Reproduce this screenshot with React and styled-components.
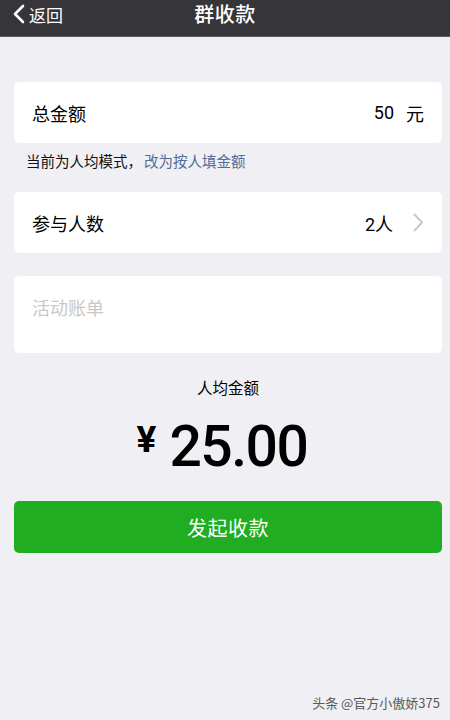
import React from "react";
import styled, { createGlobalStyle } from "styled-components";

const Global = createGlobalStyle`
  html, body { margin: 0; padding: 0; background: #efeff4; }
  body { font-family: "Noto Sans CJK SC", "Noto Sans", sans-serif; }
  * { box-sizing: border-box; }
`;

const Page = styled.div`
  width: 450px;
  height: 720px;
  background: #efeff4;
  display: flex;
  flex-direction: column;
  position: relative;
  overflow: hidden;
`;

const NavBar = styled.div`
  height: 37px;
  background: #363539;
  border-bottom: 1px solid #5a595e;
  display: grid;
  grid-template-columns: 1fr auto 1fr;
  align-items: start;
  color: #fff;
`;

const Back = styled.div`
  display: flex;
  align-items: center;
  gap: 4px;
  padding-left: 12px;
  height: 28px;
  font-size: 17px;
`;

const Title = styled.div`
  font-size: 20px;
  font-weight: 500;
  line-height: 28px;
  letter-spacing: 0.5px;
`;

const Body = styled.div`
  display: flex;
  flex-direction: column;
  padding: 0 8px 0 14px;
`;

const Card = styled.div`
  background: #fff;
  border-radius: 5px;
  height: ${(p) => p.$h || 61}px;
  margin-top: ${(p) => p.$mt || 0}px;
  display: flex;
  align-items: ${(p) => (p.$top ? "flex-start" : "center")};
  justify-content: space-between;
  padding: ${(p) => (p.$top ? "18px 18px 0 18px" : "0 18px")};
  font-size: 18px;
  color: #000;
`;

const Label = styled.span`
  color: ${(p) => (p.$placeholder ? "#c8c8c8" : "#000")};
`;

const Value = styled.div`
  display: flex;
  align-items: center;
  gap: ${(p) => p.$gap || 0}px;
`;

const Num = styled.span`
  font-family: "Roboto", "Noto Sans", sans-serif;
  font-size: 18px;
`;

const Note = styled.div`
  font-size: 14.5px;
  color: #111;
  padding: 6px 0 0 12px;
  height: 49px;
  line-height: 24px;
`;

const Link = styled.span`
  color: #576b95;
  margin-left: 2px;
`;

const Center = styled.div`
  text-align: center;
  font-size: 15.5px;
  color: #000;
  margin-top: ${(p) => p.$mt}px;
  line-height: 22px;
`;

const Amount = styled.div`
  display: flex;
  justify-content: center;
  align-items: flex-start;
  margin-top: 18px;
  padding-right: 12px;
  height: 62px;
  color: #000;
`;

const Yen = styled.span`
  font-family: "Roboto", sans-serif;
  font-weight: 700;
  font-size: 37px;
  line-height: 1;
  margin-top: 5px;
  margin-right: 13px;
`;

const Big = styled.span`
  font-family: "Roboto", sans-serif;
  font-weight: 500;
  font-size: 57px;
  line-height: 62px;
  letter-spacing: -1.5px;
`;

const Button = styled.div`
  margin-top: 23px;
  height: 52px;
  border-radius: 5px;
  background: #21ad21;
  color: #fff;
  font-size: 20px;
  display: flex;
  align-items: center;
  justify-content: center;
  letter-spacing: 0.5px;
`;

const Watermark = styled.div`
  position: absolute;
  right: 10px;
  bottom: 8px;
  font-size: 13px;
  color: #5a5a5a;
`;

export default function App() {
  return (
    <Page>
      <Global />
      <NavBar>
        <Back>
          <svg width="13" height="20" viewBox="0 0 13 20">
            <path d="M11 2 L3 10 L11 18" stroke="#fff" strokeWidth="2.6" fill="none" strokeLinecap="round" strokeLinejoin="round" />
          </svg>
          <span>返回</span>
        </Back>
        <Title>群收款</Title>
        <div />
      </NavBar>
      <Body>
        <Card $mt={45}>
          <Label>总金额</Label>
          <Value $gap={12}>
            <Num>50</Num>
            <span>元</span>
          </Value>
        </Card>
        <Note>
          当前为人均模式，<Link>改为按人填金额</Link>
        </Note>
        <Card>
          <Label>参与人数</Label>
          <Value $gap={20}>
            <span><Num>2</Num>人</span>
            <svg width="11" height="19" viewBox="0 0 11 19">
              <path d="M1.5 1.5 L9 9.5 L1.5 17.5" stroke="#c7c7cc" strokeWidth="2" fill="none" strokeLinecap="round" strokeLinejoin="round" />
            </svg>
          </Value>
        </Card>
        <Card $mt={23} $h={77} $top>
          <Label $placeholder>活动账单</Label>
        </Card>
        <Center $mt={23}>人均金额</Center>
        <Amount>
          <Yen>¥</Yen>
          <Big>25.00</Big>
        </Amount>
        <Button>发起收款</Button>
      </Body>
      <Watermark>头条 @官方小傲娇375</Watermark>
    </Page>
  );
}
